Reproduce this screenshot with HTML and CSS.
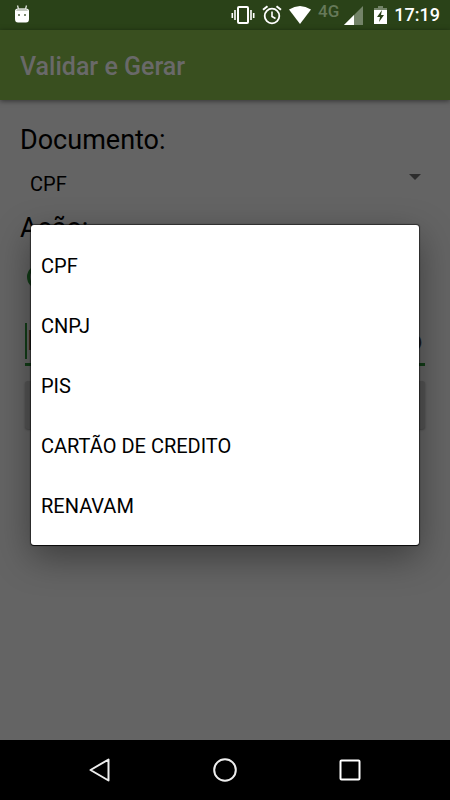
FILE: index.html
```html
<!DOCTYPE html>
<html lang="pt-BR">
<head>
<meta charset="utf-8">
<meta name="viewport" content="width=device-width, initial-scale=1">
<title>Validar e Gerar</title>
<link rel="stylesheet" href="styles.css">
</head>
<body>
<div class="screen">
  <header class="status">
    <svg class="droid" width="16" height="20" viewBox="0 0 16 20" aria-hidden="true">
      <path d="M3.500 0.500L4.500 4M12.500 0.500L11.500 4" stroke="#dfe3dc" stroke-width="1.300"/>
      <path d="M1 6Q1 3.500 4 3.500H12Q15 3.500 15 6V14Q15 17.500 12 17.500H4Q1 17.500 1 14Z" fill="#fff"/>
      <path d="M2 6Q3 3.500 5 3.500H11Q13 3.500 14 6Z" fill="#c5cac1"/>
      <path d="M4 9h2v2H4zM10 9h2v2h-2z" fill="#7c8a70"/>
    </svg>
    <div class="status-icons">
      <svg width="24" height="20" viewBox="0 0 24 20" fill="none" stroke="#fff" aria-hidden="true">
        <rect x="7" y="2" width="10" height="16" rx="1" stroke-width="2"/>
        <path d="M4 5v10M20 5v10" stroke-width="1.600"/>
        <path d="M1.300 8v5M22.700 8v5" stroke-width="1.600"/>
      </svg>
      <svg width="20" height="20" viewBox="0 0 20 20" fill="none" stroke="#fff" aria-hidden="true">
        <circle cx="10" cy="11" r="7.300" stroke-width="1.800"/>
        <path d="M10 6.500V11.500L13.500 13.500" stroke-width="1.600"/>
        <path d="M1 4.800L5.500 1.200M19 4.800L14.500 1.200" stroke-width="2"/>
      </svg>
      <svg width="22" height="20" viewBox="0 0 22 20" aria-hidden="true">
        <path d="M0 4.500Q11-2.500 22 4.500L11 19Z" fill="#fff"/>
      </svg>
      <span class="network">4G</span>
      <svg class="signal" width="20" height="20" viewBox="0 0 20 20" aria-hidden="true">
        <path d="M19 1V20H0Z" fill="#738368"/>
        <path d="M10 10V20H0Z" fill="#fff"/>
      </svg>
      <svg class="battery" width="13" height="20" viewBox="0 0 13 20" aria-hidden="true">
        <path d="M4 1H9V3H13V7H0V3H4Z" fill="#738368"/>
        <path d="M0 5H13V19H0Z" fill="#fff"/>
        <path d="M8 5L3 12H6L5 17L10 10H7Z" fill="#2a4218"/>
      </svg>
      <time class="clock">17:19</time>
    </div>
  </header>

  <div class="window">
    <div class="appbar"><h1>Validar e Gerar</h1></div>
    <main class="form">
      <label class="heading" for="documento">Documento:</label>
      <div class="spinner">
        <select id="documento">
          <option>CPF</option>
          <option>CNPJ</option>
          <option>PIS</option>
          <option>CARTÃO DE CREDITO</option>
          <option>RENAVAM</option>
        </select>
        <svg width="12" height="6" viewBox="0 0 12 6" aria-hidden="true"><path d="M0 0H12L6 6Z" fill="#2d2d2d"/></svg>
      </div>
      <span class="heading" id="acao">Ação:</span>
      <div class="radio-row">
        <input type="radio" name="acao" aria-labelledby="acao" checked>
      </div>
      <div class="field">
        <input type="text" aria-label="Documento" placeholder="Escreva o número do documento">
      </div>
      <button class="submit" type="button" aria-label="Validar"></button>
    </main>

    <div class="overlay">
      <div class="menu" role="listbox" aria-label="Documento">
        <button type="button" role="option">CPF</button>
        <button type="button" role="option">CNPJ</button>
        <button type="button" role="option">PIS</button>
        <button type="button" role="option">CARTÃO DE CREDITO</button>
        <button type="button" role="option">RENAVAM</button>
      </div>
    </div>
  </div>

  <nav class="navbar">
    <button type="button" aria-label="Voltar">
      <svg width="26" height="26" viewBox="0 0 26 26" fill="none" stroke="#eee" stroke-width="2" stroke-linejoin="round"><path d="M21.500 2.500V23.500L3.500 13Z"/></svg>
    </button>
    <button type="button" aria-label="Início">
      <svg width="26" height="26" viewBox="0 0 26 26" fill="none" stroke="#eee" stroke-width="2"><circle cx="13" cy="13" r="10.800"/></svg>
    </button>
    <button type="button" aria-label="Recentes">
      <svg width="26" height="26" viewBox="0 0 26 26" fill="none" stroke="#fff" stroke-width="2"><rect x="3.500" y="3.500" width="19" height="19" rx="1"/></svg>
    </button>
  </nav>
</div>
</body>
</html>
```
FILE: styles.css
```css
* {
  box-sizing: border-box;
}

body {
  margin: 0;
  font-family: Roboto, sans-serif;
  font-size: 20px;
  color: #000;
}

button,
input,
select {
  margin: 0;
  padding: 0;
  border: 0;
  font: inherit;
  color: inherit;
  background: none;
  appearance: none;
  outline: 0;
}

.screen {
  display: flex;
  flex-direction: column;
  min-height: 100vh;
  background: #646464;
}

.status {
  display: flex;
  align-items: center;
  justify-content: space-between;
  height: 30px;
  padding: 0 10px 0 14px;
  background: #2a4218;
  color: #fff;
}

.status svg {
  display: block;
}

.status-icons {
  display: flex;
  align-items: center;
  gap: 7px;
}

.network {
  align-self: flex-start;
  font-size: 17px;
  font-weight: 500;
  line-height: 22px;
  color: #667959;
}

.status .signal {
  margin: 0 3px 0 -2px;
}

.clock {
  font-size: 18px;
  font-weight: 500;
  line-height: 30px;
}

.window {
  position: relative;
  display: flex;
  flex: 1;
  flex-direction: column;
}

.appbar {
  display: flex;
  align-items: center;
  height: 70px;
  padding: 2px 20px 0;
  background: #394f1f;
  color: #696969;
  box-shadow: 0 1px 5px rgba(0, 0, 0, 0.5);
}

.appbar h1 {
  margin: 0;
  font-size: 25px;
  font-weight: 500;
}

.form {
  display: flex;
  flex-direction: column;
  padding: 20px;
}

.heading {
  font-size: 27px;
  line-height: 40px;
}

.spinner {
  display: flex;
  align-items: center;
  height: 48px;
  padding: 0 9px 0 10px;
}

.spinner select {
  flex: 1;
  height: 48px;
}

.spinner svg {
  margin-bottom: 14px;
}

.radio-row {
  height: 75px;
  padding: 17px 7px;
}

.radio-row input {
  display: block;
  width: 24px;
  height: 24px;
  border: 3px solid #123d17;
  border-radius: 50%;
}

.field {
  margin: 0 5px;
  padding-bottom: 4px;
  border-bottom: 3px solid #123d17;
}

.field input {
  display: block;
  width: 100%;
  height: 36px;
  border-left: 2px solid #123d17;
  font-size: 27px;
}

.field input::placeholder {
  color: #1c1c1c;
  opacity: 1;
}

.submit {
  height: 48px;
  margin: 15px 5px 0;
  border-radius: 3px;
  background: #545454;
  box-shadow: 0 1px 2px rgba(0, 0, 0, 0.3);
}

.overlay {
  position: absolute;
  inset: 0;
  display: flex;
  align-items: center;
  padding: 0 31px;
}

.menu {
  display: flex;
  flex: 1;
  flex-direction: column;
  padding: 10px 0;
  border-radius: 3px;
  background: #fff;
  box-shadow: 0 0 1px 1px rgba(0, 0, 0, 0.5), 0 1px 0 rgba(0, 0, 0, 0.7), 0 12px 36px rgba(0, 0, 0, 0.4);
}

.menu button {
  height: 60px;
  padding: 2px 10px 0;
  text-align: left;
}

.navbar {
  display: flex;
  align-items: center;
  justify-content: center;
  gap: 65px;
  height: 60px;
  background: #000;
}

.navbar button {
  display: grid;
  place-items: center;
  width: 60px;
  height: 60px;
}
```
